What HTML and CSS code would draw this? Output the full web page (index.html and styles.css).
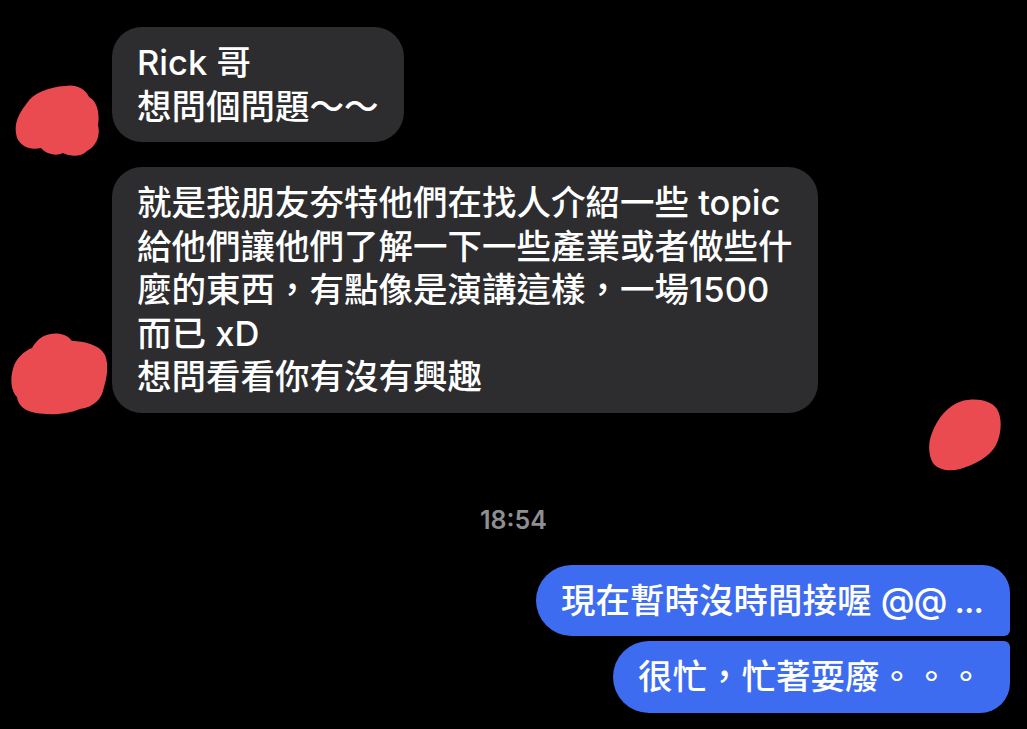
FILE: index.html
```html
<!DOCTYPE html>
<html>
<head>
<meta charset="utf-8">
<title>Chat</title>
<link rel="stylesheet" href="styles.css">
</head>
<body>
<div class="chat">

  <div class="msg in first">
    <div class="avatar">
      <svg class="blob b1" width="85" height="72" viewBox="0 0 85 72">
        <path d="M50 1 C60 -1 70 3 74 12 C82 16 85 28 83 40 C86 52 80 62 72 66 C66 72 56 72 48 68 C40 72 30 68 26 63 C14 66 2 60 1 48 C-1 36 6 26 12 18 C18 8 34 2 50 1Z"/>
      </svg>
    </div>
    <div class="bubble">Rick 哥<br>想問個問題～～</div>
  </div>

  <div class="msg in second">
    <div class="avatar">
      <svg class="blob b2" width="97" height="82" viewBox="0 0 97 82">
        <path d="M34 3 C42 -1 56 -1 62 8 C74 8 90 12 95 22 C99 32 97 44 94 54 C92 66 84 74 70 76 C56 82 38 82 26 80 C14 78 8 72 7 64 C1 58 0 46 3 36 C5 26 14 18 22 15 C26 8 30 5 34 3Z"/>
      </svg>
    </div>
    <div class="bubble">就是我朋友夯特他們在找人介紹一些 topic<br>給他們讓他們了解一下一些產業或者做些什<br>麼的東西，有點像是演講這樣，一場1500<br>而已 xD<br>想問看看你有沒有興趣</div>
  </div>

  <div class="seen">
    <svg class="blob b3" width="74" height="73" viewBox="0 0 74 73">
      <path d="M34 2 C46 -1 62 0 69 10 C75 20 73 36 68 46 C62 58 46 66 32 70 C22 73 10 71 5 64 C0 56 0 44 4 34 C9 20 20 6 34 2Z"/>
    </svg>
  </div>

  <div class="time">18:54</div>

  <div class="msg out top">
    <div class="bubble blue">現在暫時沒時間接喔 <span class="latin">@@ ...</span></div>
  </div>
  <div class="msg out bottom">
    <div class="bubble blue">很忙，忙著耍廢。。。</div>
  </div>

</div>
</body>
</html>
```

FILE: styles.css
```css
body {
  margin: 0;
  background: #000;
  font-family: Inter, "Noto Sans CJK TC", sans-serif;
  color: #fff;
}

.chat {
  padding-top: 27px;
  display: flex;
  flex-direction: column;
}

.msg {
  display: flex;
}

.msg.in {
  align-items: flex-end;
}

.msg.second {
  margin-top: 25px;
}

.avatar {
  width: 112px;
  flex: none;
}

.blob path {
  fill: #e94b50;
}

.b1 {
  display: block;
  margin-left: 15px;
  margin-bottom: -15px;
}

.b2 {
  display: block;
  margin-left: 10px;
  margin-bottom: -2px;
}

.bubble {
  background: #2d2d2f;
  border-radius: 30px;
  padding: 14px 25px;
  font-size: 34.5px;
  font-weight: 500;
  line-height: 43.5px;
  white-space: nowrap;
}

.seen {
  display: flex;
  justify-content: flex-end;
  padding-right: 25px;
  margin-top: -14px;
}

.b3 {
  display: block;
}

.time {
  text-align: center;
  color: #8e8e93;
  font-size: 25px;
  font-weight: 600;
  line-height: 30px;
  margin-top: 33px;
}

.msg.out {
  justify-content: flex-end;
  padding-right: 17px;
}

.msg.out.top {
  margin-top: 30px;
}

.msg.out.bottom {
  margin-top: 5px;
}

.bubble.blue {
  background: #3e6cf0;
  padding-right: 27px;
}

.latin {
  letter-spacing: -1px;
}

.top .bubble {
  border-radius: 36px 28px 6px 36px;
}

.bottom .bubble {
  border-radius: 36px 6px 30px 36px;
}
```
